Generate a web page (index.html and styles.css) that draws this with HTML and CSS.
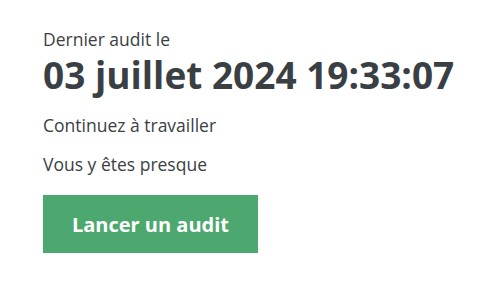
FILE: index.html
```html
<!DOCTYPE html>
<html lang="fr">
<head>
    <meta charset="UTF-8">
    <title>Audit</title>
    <link rel="stylesheet" href="styles.css">
</head>
<body>

<div class="audit">
    <div class="audit-label">Dernier audit le</div>
    <div class="audit-date">03 juillet 2024 19:33:07</div>
    <p class="audit-msg">Continuez à travailler</p>
    <p class="audit-msg">Vous y êtes presque</p>
    <button class="btn-audit">Lancer un audit</button>
</div>

</body>
</html>
```

FILE: styles.css
```css
body { margin: 0; font-family: "Open Sans", sans-serif; color: #3a3f44; background: white; }

.audit { padding: 27px 20px 27px 43px; }
.audit-label { font-size: 17.5px; line-height: 24px; }
.audit-date { font-size: 37px; font-weight: bold; line-height: 46px; margin-top: 1px; white-space: nowrap; }
.audit-msg { font-size: 17.5px; line-height: 24px; margin: 15px 0 0; }

.btn-audit { display: block; margin-top: 19px; width: 215px; height: 58px; border: none; background: #4ca86f; color: white; font-family: "Open Sans", sans-serif; font-size: 20px; font-weight: bold; cursor: pointer; }
```
